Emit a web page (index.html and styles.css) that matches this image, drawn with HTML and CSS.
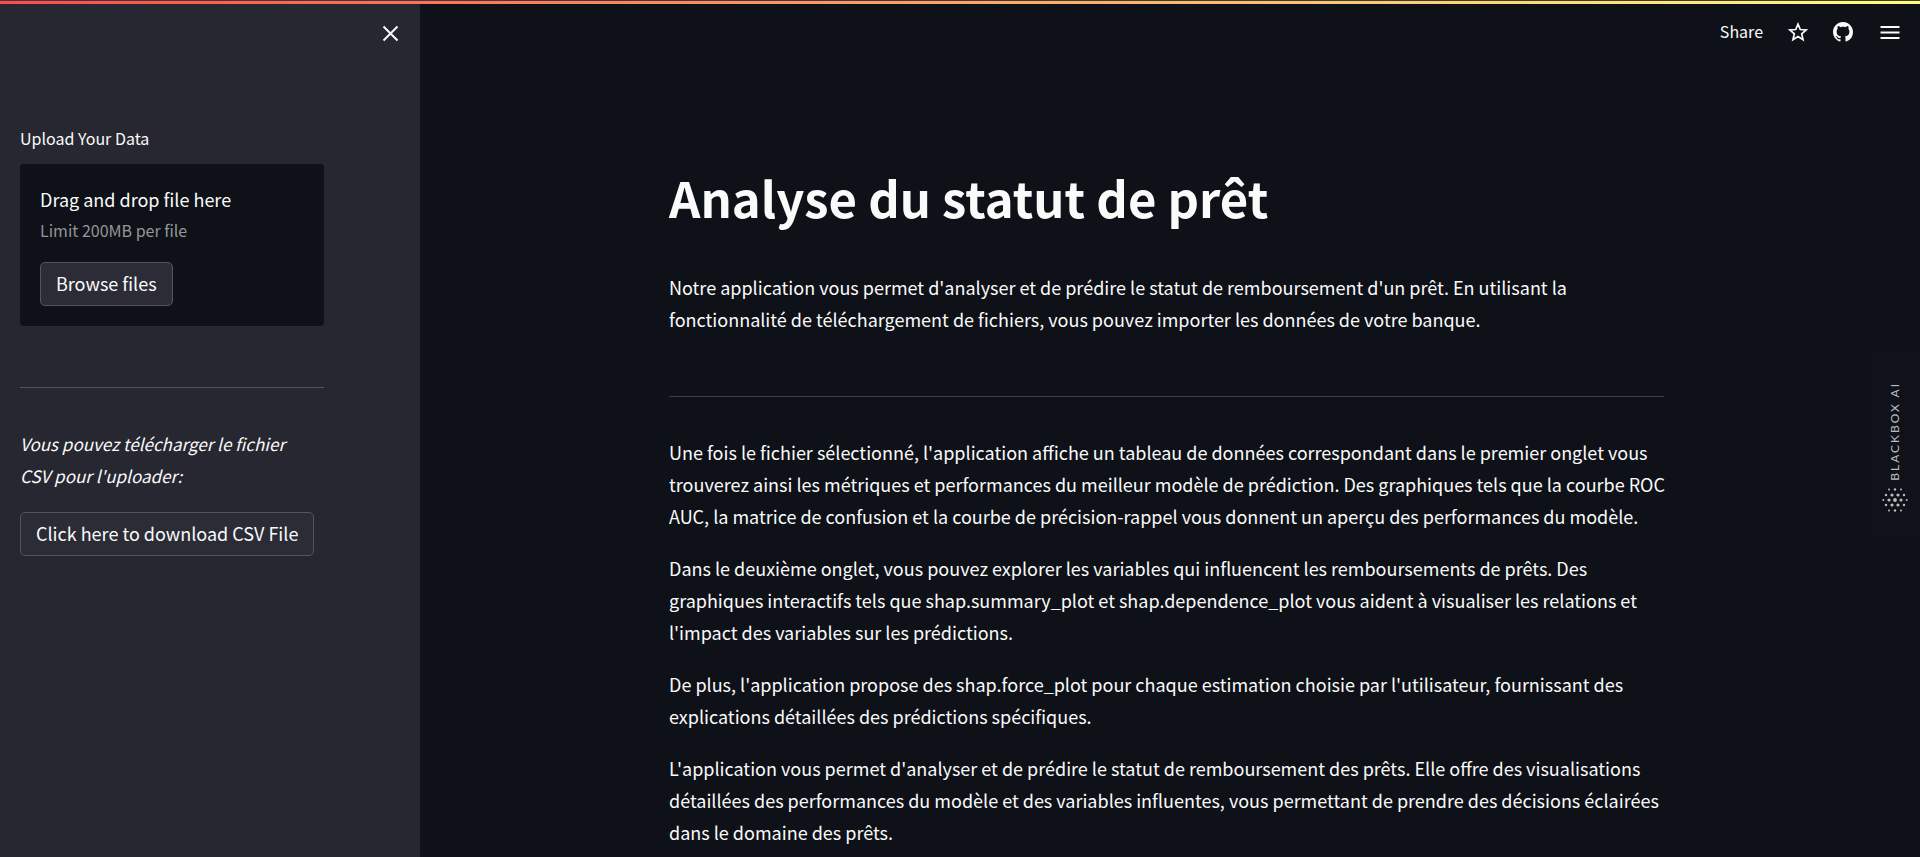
FILE: index.html
```html
<!DOCTYPE html>
<html lang="fr">
<head>
<meta charset="utf-8">
<title>Analyse du statut de prêt</title>
<link rel="stylesheet" href="styles.css">
</head>
<body>
<div class="decoration"></div>
<div class="app">
  <aside class="sidebar">
    <div class="sidebar-top">
      <button class="icon-button" type="button" aria-label="Fermer">
        <svg class="icon" viewBox="0 0 20 20"><path d="M3.500 3.500l14 14M17.500 3.500l-14 14" fill="none" stroke="currentColor" stroke-width="2"/></svg>
      </button>
    </div>
    <div class="sidebar-content">
      <label class="label" for="browse">Upload Your Data</label>
      <section class="dropzone">
        <span class="drop-title">Drag and drop file here</span>
        <small class="drop-limit">Limit 200MB per file</small>
        <button class="button" id="browse" type="button">Browse files</button>
      </section>
      <hr class="rule">
      <p class="text note"><em>Vous pouvez télécharger le fichier CSV pour l'uploader:</em></p>
      <button class="button" type="button">Click here to download CSV File</button>
    </div>
  </aside>
  <main class="main">
    <header class="toolbar">
      <button class="share" type="button">Share</button>
      <button class="icon-button" type="button" aria-label="Favori">
        <svg class="icon" viewBox="0 0 20 20"><path d="M10 2.100l2.300 5.400 5.900.5-4.500 3.900 1.350 5.800L10 14.600l-5.050 3.100 1.350-5.800L1.800 8l5.900-.5z" fill="none" stroke="currentColor" stroke-width="1.700"/></svg>
      </button>
      <button class="icon-button" type="button" aria-label="GitHub">
        <svg class="icon" viewBox="0 0 16 16"><path fill="currentColor" d="M8 0C3.580 0 0 3.580 0 8c0 3.540 2.290 6.530 5.470 7.590.4.070.55-.17.55-.38 0-.19-.01-.82-.01-1.490-2.010.37-2.530-.49-2.690-.94-.09-.23-.48-.94-.82-1.130-.28-.15-.68-.52-.01-.53.63-.01 1.080.58 1.230.82.72 1.210 1.870.87 2.330.66.070-.52.28-.87.51-1.070-1.780-.2-3.640-.89-3.640-3.950 0-.87.31-1.590.82-2.150-.08-.2-.36-1.020.08-2.120 0 0 .67-.21 2.200.82.64-.18 1.320-.27 2-.27s1.360.09 2 .27c1.530-1.040 2.200-.82 2.200-.82.44 1.100.16 1.920.08 2.120.51.560.82 1.270.82 2.150 0 3.070-1.870 3.750-3.650 3.950.29.25.54.73.54 1.480 0 1.070-.01 1.930-.01 2.200 0 .21.15.46.55.38A8.010 8.010 0 0016 8c0-4.420-3.580-8-8-8z"/></svg>
      </button>
      <button class="icon-button menu" type="button" aria-label="Menu">
        <svg class="icon" viewBox="0 0 20 20"><path d="M.5 5h19M.5 10.500h19M.5 16h19" fill="none" stroke="currentColor" stroke-width="2"/></svg>
      </button>
    </header>
    <article class="content">
      <h1 class="title">Analyse du statut de prêt</h1>
      <p class="text">Notre application vous permet d'analyser et de prédire le statut de remboursement d'un prêt. En utilisant la fonctionnalité de téléchargement de fichiers, vous pouvez importer les données de votre banque.</p>
      <hr class="rule">
      <p class="text">Une fois le fichier sélectionné, l'application affiche un tableau de données correspondant dans le premier onglet vous trouverez ainsi les métriques et performances du meilleur modèle de prédiction. Des graphiques tels que la courbe ROC AUC, la matrice de confusion et la courbe de précision-rappel vous donnent un aperçu des performances du modèle.</p>
      <p class="text">Dans le deuxième onglet, vous pouvez explorer les variables qui influencent les remboursements de prêts. Des graphiques interactifs tels que shap.summary_plot et shap.dependence_plot vous aident à visualiser les relations et l'impact des variables sur les prédictions.</p>
      <p class="text">De plus, l'application propose des shap.force_plot pour chaque estimation choisie par l'utilisateur, fournissant des explications détaillées des prédictions spécifiques.</p>
      <p class="text">L'application vous permet d'analyser et de prédire le statut de remboursement des prêts. Elle offre des visualisations détaillées des performances du modèle et des variables influentes, vous permettant de prendre des décisions éclairées dans le domaine des prêts.</p>
    </article>
  </main>
</div>
<div class="blackbox">
  <span class="blackbox-name">BLACKBOX AI</span>
  <svg class="blackbox-dots" viewBox="0 0 26 26" fill="currentColor">
    <circle cx="7" cy="2.500" r="1"/><circle cx="13" cy="2.500" r="1.200"/><circle cx="19" cy="2.500" r="1"/>
    <circle cx="4" cy="8" r="1.200"/><circle cx="10" cy="8" r="1.600"/><circle cx="16" cy="8" r="1.600"/><circle cx="22" cy="8" r="1.200"/>
    <circle cx="1.300" cy="13" r="1"/><circle cx="7" cy="13" r="1.600"/><circle cx="13" cy="13" r="1.900"/><circle cx="19" cy="13" r="1.600"/><circle cx="24.700" cy="13" r="1"/>
    <circle cx="4" cy="18" r="1.200"/><circle cx="10" cy="18" r="1.600"/><circle cx="16" cy="18" r="1.600"/><circle cx="22" cy="18" r="1.200"/>
    <circle cx="7" cy="23.500" r="1"/><circle cx="13" cy="23.500" r="1.200"/><circle cx="19" cy="23.500" r="1"/>
  </svg>
</div>
</body>
</html>
```
FILE: styles.css
```css
* { box-sizing: border-box; }

body {
  margin: 0;
  background: #0e1117;
  color: #fafafa;
  font-family: "Noto Sans CJK SC", "Noto Sans", sans-serif;
  font-size: 18px;
  line-height: 32px;
}

button {
  font: inherit;
  color: inherit;
  cursor: pointer;
}

.decoration {
  position: fixed;
  inset: 0 0 auto;
  z-index: 2;
  height: 4px;
  border-top: 1px solid #3b3b41;
  background: linear-gradient(90deg, #ff4b4b, #fffd80);
}

.app {
  display: flex;
  min-height: 100vh;
}

.sidebar {
  flex: 0 0 420px;
  background: #262730;
}

.sidebar-top {
  display: flex;
  justify-content: flex-end;
  padding: 23px 20px 0;
}

.icon-button {
  display: flex;
  padding: 0;
  border: 0;
  background: none;
}

.icon {
  width: 20px;
  height: 20px;
}

.sidebar-content {
  padding: 81px 96px 0 20px;
}

.label {
  display: block;
  margin-bottom: 12px;
  font-size: 16px;
  line-height: 28px;
}

.dropzone {
  display: flex;
  flex-direction: column;
  align-items: flex-start;
  padding: 19px 20px 20px;
  border-radius: 4px;
  background: #0e1117;
}

.drop-limit {
  margin-bottom: 17px;
  color: #93959a;
  font-size: 16px;
  line-height: 30px;
}

.button {
  height: 44px;
  padding: 0 15px 2px;
  border: 1px solid #53545c;
  border-radius: 5px;
  background: #2b2c36;
  line-height: 32px;
}

.rule {
  height: 1px;
  margin: 61px 0 40px;
  border: 0;
  background: #53545b;
}

.text { margin: 0 0 20px; }

.note {
  padding-right: 20px;
  font-size: 17px;
}

.main {
  flex: 1;
  min-width: 0;
  padding-right: 7px;
}

.toolbar {
  display: flex;
  align-items: center;
  justify-content: flex-end;
  gap: 25px;
  padding: 16px 13px 0 0;
}

.share {
  padding: 0 0 2px;
  border: 0;
  background: none;
  font-size: 16px;
  line-height: 30px;
}

.menu { margin-left: 2px; }

.content {
  max-width: 995px;
  margin: 0 auto;
  padding-top: 115px;
}

/* Body copy may run slightly past the rule before it wraps. */
.content .text { margin-right: -10px; }
.content .text:last-child { margin-bottom: 0; }

.title {
  margin: 0 0 40px;
  font-size: 49px;
  line-height: 68px;
}

.content .rule {
  margin-bottom: 39px;
  background: #3d4044;
}

.blackbox {
  position: fixed;
  top: 353px;
  right: 0;
  display: flex;
  flex-direction: column;
  align-items: center;
  gap: 6px;
  width: 50px;
  padding: 29px 0 23px;
  border-radius: 8px 0 0 8px;
  background: #111219;
  color: #bcbdc0;
}

.blackbox-name {
  writing-mode: vertical-rl;
  transform: rotate(180deg);
  font-family: Lato, sans-serif;
  font-size: 12px;
  line-height: 16px;
  letter-spacing: 2px;
}

.blackbox-dots {
  width: 26px;
  height: 26px;
}
```
